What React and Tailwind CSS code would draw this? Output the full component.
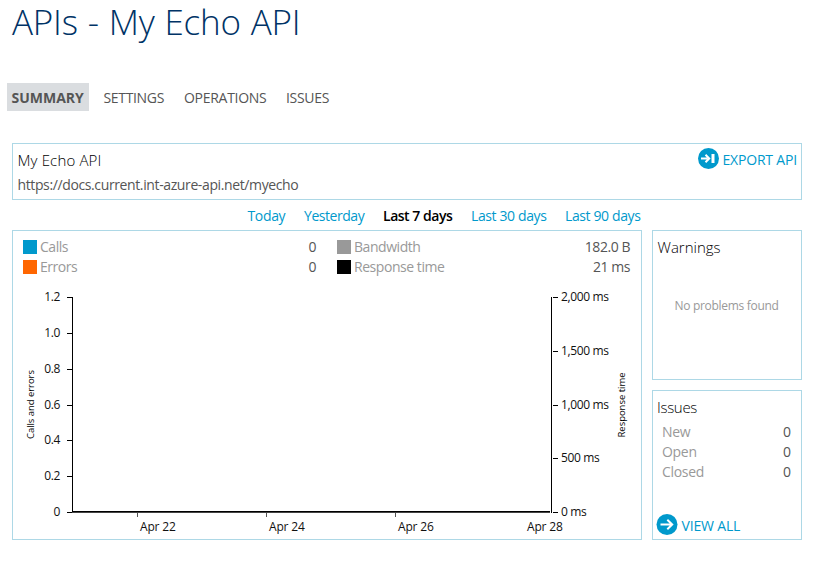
const tabs = [
  { label: 'SUMMARY', cls: 'w-[82px] bg-[#dadde0] pl-[4.5px] font-bold' },
  { label: 'SETTINGS', cls: 'ml-[14.5px] w-[80.5px] tracking-[-0.34px]' },
  { label: 'OPERATIONS', cls: 'w-[102px] tracking-[-0.28px]' },
  { label: 'ISSUES', cls: 'tracking-[-0.3px]' },
]

const ranges = [
  { label: 'Today', cls: 'w-[56.5px] tracking-[-0.35px]' },
  { label: 'Yesterday', cls: 'w-[79px] tracking-[-0.45px]' },
  { label: 'Last 7 days', cls: 'w-[88px] font-semibold tracking-[-0.48px] text-black' },
  { label: 'Last 30 days', cls: 'w-[94px] tracking-[-0.38px]' },
  { label: 'Last 90 days', cls: 'tracking-[-0.38px]' },
]

const legendLeft = [
  { label: 'Calls', value: '0', swatch: 'bg-[#0099cc]' },
  { label: 'Errors', value: '0', swatch: 'bg-[#ff6600]' },
]
const legendRight = [
  { label: 'Bandwidth', value: '182.0 B', swatch: 'bg-[#999999]' },
  { label: 'Response time', value: '21 ms', swatch: 'bg-black' },
]

const issues = [
  { label: 'New', value: '0' },
  { label: 'Open', value: '0' },
  { label: 'Closed', value: '0' },
]

const leftTicks = [
  { y: 6, label: '1.2' },
  { y: 42, label: '1.0' },
  { y: 78, label: '0.8' },
  { y: 114, label: '0.6' },
  { y: 149, label: '0.4' },
  { y: 185, label: '0.2' },
  { y: 221, label: '0' },
]
const rightTicks = [
  { y: 6, label: '2,000 ms' },
  { y: 60, label: '1,500 ms' },
  { y: 114, label: '1,000 ms' },
  { y: 167, label: '500 ms' },
  { y: 221, label: '0 ms' },
]
const dateTicks = [
  { x: 124, label: 'Apr 22' },
  { x: 253, label: 'Apr 24' },
  { x: 382, label: 'Apr 26' },
  { x: 511, label: 'Apr 28' },
]

function Legend({ items, className }) {
  return (
    <div className={className}>
      {items.map((item) => (
        <div key={item.label} className="flex h-5 items-center leading-5">
          <span className={`size-[14px] ${item.swatch}`} />
          <span className="ml-[3px] flex-1 tracking-[-0.45px] text-[#999999]">{item.label}</span>
          <span className="tracking-[-0.45px] text-[#555555]">{item.value}</span>
        </div>
      ))}
    </div>
  )
}

function Chart() {
  return (
    <svg className="block" width="628" height="257" viewBox="0 -10 628 257">
      <g fill="#000" shapeRendering="crispEdges">
        <rect x="59" y="6" width="1" height="216" />
        <rect x="538" y="6" width="1" height="216" />
        <rect x="59" y="220" width="478" height="1" />
        <rect x="59" y="221" width="478" height="1" fill="#444" />
        {leftTicks.map((t) => (
          <rect key={t.label} x="54" y={t.y} width="5" height="1" />
        ))}
        {rightTicks.map((t) => (
          <rect key={t.label} x="540" y={t.y} width="5" height="1" />
        ))}
        {dateTicks.slice(0, 3).map((t) => (
          <rect key={t.label} x={t.x} y="222" width="1" height="4" fill="#555" />
        ))}
      </g>
      <g className="fill-[#111] text-[12px] tracking-[-0.36px]">
        {leftTicks.map((t) => (
          <text key={t.label} x="47" y={t.y + 4} textAnchor="end">{t.label}</text>
        ))}
        {rightTicks.map((t) => (
          <text key={t.label} x="548" y={t.y + 4}>{t.label}</text>
        ))}
      </g>
      <g className="fill-[#111] text-[12px] tracking-[-0.16px]">
        {dateTicks.map((t) => (
          <text key={t.label} x={t.x + 3} y="240">{t.label}</text>
        ))}
      </g>
      <g className="fill-black text-[9.5px]">
        <text transform="translate(21 148) rotate(-90)" textLength="69">Calls and errors</text>
        <text transform="translate(612 146.5) rotate(-90)" textLength="65">Response time</text>
      </g>
    </svg>
  )
}

export default function App() {
  return (
    <main className="h-[563px] w-[822px] overflow-hidden bg-white font-['Open_Sans','Liberation_Sans',sans-serif] text-[14px] leading-5 whitespace-nowrap text-[#555555]">
      <h1 className="h-[83px] pl-[12px] text-[35px] leading-[43px] font-light tracking-[-0.2px] [word-spacing:1px] text-[#003366]">APIs - My Echo API</h1>

      <nav className="flex h-7 pl-[7px] leading-[30px]">
        {tabs.map((t) => (
          <a key={t.label} className={t.cls}>{t.label}</a>
        ))}
      </nav>

      <section className="mt-8 ml-3 flex h-[57px] w-[790px] justify-between border border-[#add8e6] pr-[4px] pl-[4.5px]">
        <div>
          <h2 className="pt-[6px] text-[15px] leading-5 font-light tracking-[0.15px] text-black">My Echo API</h2>
          <p className="mt-[5px] tracking-[-0.38px]">https://docs.current.int-azure-api.net/myecho</p>
        </div>
        <a className="flex pt-[4px] text-[#0099cc]">
          <svg width="22" height="22" viewBox="0 0 22 22">
            <circle cx="11.5" cy="10.5" r="10.5" fill="#0099cc" />
            <path d="M4 10.5H10.5M8.5 6.8L12.2 10.5L8.5 14.2" fill="none" stroke="#fff" strokeWidth="2" />
            <rect x="14.5" y="6" width="3" height="9" fill="#fff" />
          </svg>
          <span className="ml-[3px] pt-[2px] tracking-[-0.18px]">EXPORT API</span>
        </a>
      </section>

      <div className="flex h-[30px] pt-[6px] pl-[247.5px] text-[#0099cc]">
        {ranges.map((r) => (
          <a key={r.label} className={r.cls}>{r.label}</a>
        ))}
      </div>

      <div className="ml-3 flex gap-[10px]">
        <section className="h-[310px] w-[630px] border border-[#add8e6]">
          <div className="flex h-[50px] pt-[6px] pl-[10px]">
            <Legend items={legendLeft} className="w-[293px]" />
            <Legend items={legendRight} className="ml-[21px] w-[293px]" />
          </div>
          <Chart />
        </section>

        <div className="flex w-[150px] flex-col gap-[10px]">
          <section className="h-[150px] border border-[#add8e6]">
            <h2 className="pt-[6px] pl-[4.5px] text-[15px] font-light text-black">Warnings</h2>
            <p className="mt-[39px] pl-[21.5px] text-[12px] tracking-[-0.3px] text-[#999999]">No problems found</p>
          </section>
          <section className="h-[150px] border border-[#add8e6]">
            <h2 className="pt-[6px] pl-[4px] text-[15px] font-light tracking-[-0.3px] text-black">Issues</h2>
            <div className="mt-[5px] h-[70px] pr-[10px] pl-[9px]">
              {issues.map((i) => (
                <div key={i.label} className="flex justify-between">
                  <span className="tracking-[-0.3px] text-[#999999]">{i.label}</span>
                  <span>{i.value}</span>
                </div>
              ))}
            </div>
            <a className="flex pt-[22px] pl-[3px] text-[#0099cc]">
              <svg width="22" height="22" viewBox="0 0 22 22">
                <circle cx="11" cy="10.5" r="10.5" fill="#0099cc" />
                <path d="M4.5 10.5H16M11.3 5.7L16.2 10.5L11.3 15.3" fill="none" stroke="#fff" strokeWidth="2" />
              </svg>
              <span className="ml-[3.5px] pt-[2px] tracking-[-0.17px]">VIEW ALL</span>
            </a>
          </section>
        </div>
      </div>
    </main>
  )
}
